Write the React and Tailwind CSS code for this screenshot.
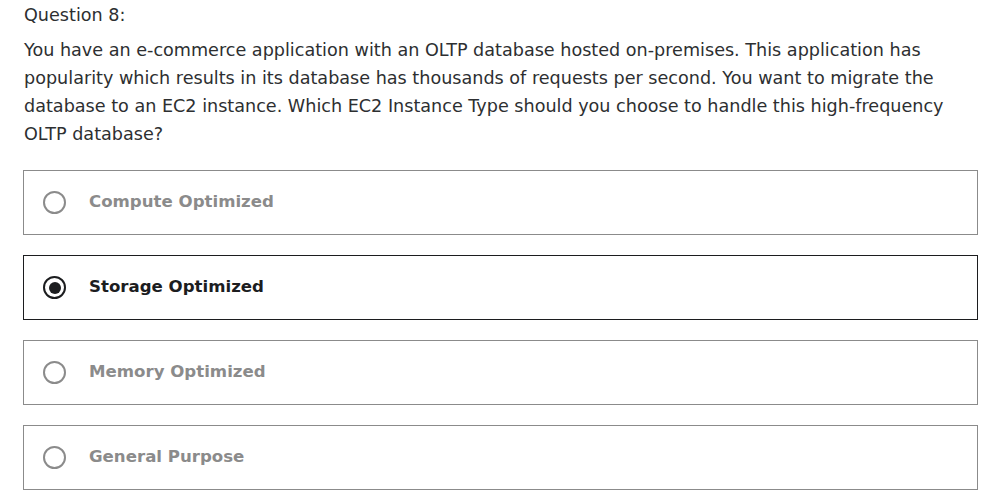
import React from "react";

const OPTIONS = [
  { key: "a", label: "Compute Optimized" },
  { key: "b", label: "Storage Optimized" },
  { key: "c", label: "Memory Optimized" },
  { key: "d", label: "General Purpose" },
];

function Radio({ checked }) {
  return (
    <span
      className={
        "w-[23px] h-[23px] rounded-full border-2 flex items-center justify-center shrink-0 " +
        (checked ? "border-[#1c1d1f]" : "border-[#8b8b8b]")
      }
    >
      {checked && <span className="w-[12px] h-[12px] rounded-full bg-[#1c1d1f]" />}
    </span>
  );
}

export default function App() {
  const selected = "b";
  return (
    <div className="w-[996px] h-[502px] bg-white pl-[23px] font-['DejaVu_Sans',sans-serif] text-[#2d2f31]">
      <div className="w-[955px]">
        <p className="text-[17.6px] leading-[30px] pl-[1px]">Question 8:</p>
        <p className="mt-[6px] text-[17.6px] leading-[28px] pl-[1px] whitespace-nowrap">
          You have an e-commerce application with an OLTP database hosted on-premises. This application has
          <br />
          popularity which results in its database has thousands of requests per second. You want to migrate the
          <br />
          database to an EC2 instance. Which EC2 Instance Type should you choose to handle this high-frequency
          <br />
          OLTP database?
        </p>
        <div className="mt-[22px] flex flex-col gap-[20px]">
          {OPTIONS.map((opt) => {
            const isChecked = opt.key === selected;
            return (
              <label
                key={opt.key}
                className={
                  "h-[65px] border flex items-center pl-[19px] gap-[23px] " +
                  (isChecked ? "border-[#1c1d1f]" : "border-[#8b8b8b]")
                }
              >
                <Radio checked={isChecked} />
                <span
                  className={
                    "text-[16.6px] font-bold " + (isChecked ? "text-[#1c1d1f]" : "text-[#8b8b8b]")
                  }
                >
                  {opt.label}
                </span>
              </label>
            );
          })}
        </div>
      </div>
    </div>
  );
}
